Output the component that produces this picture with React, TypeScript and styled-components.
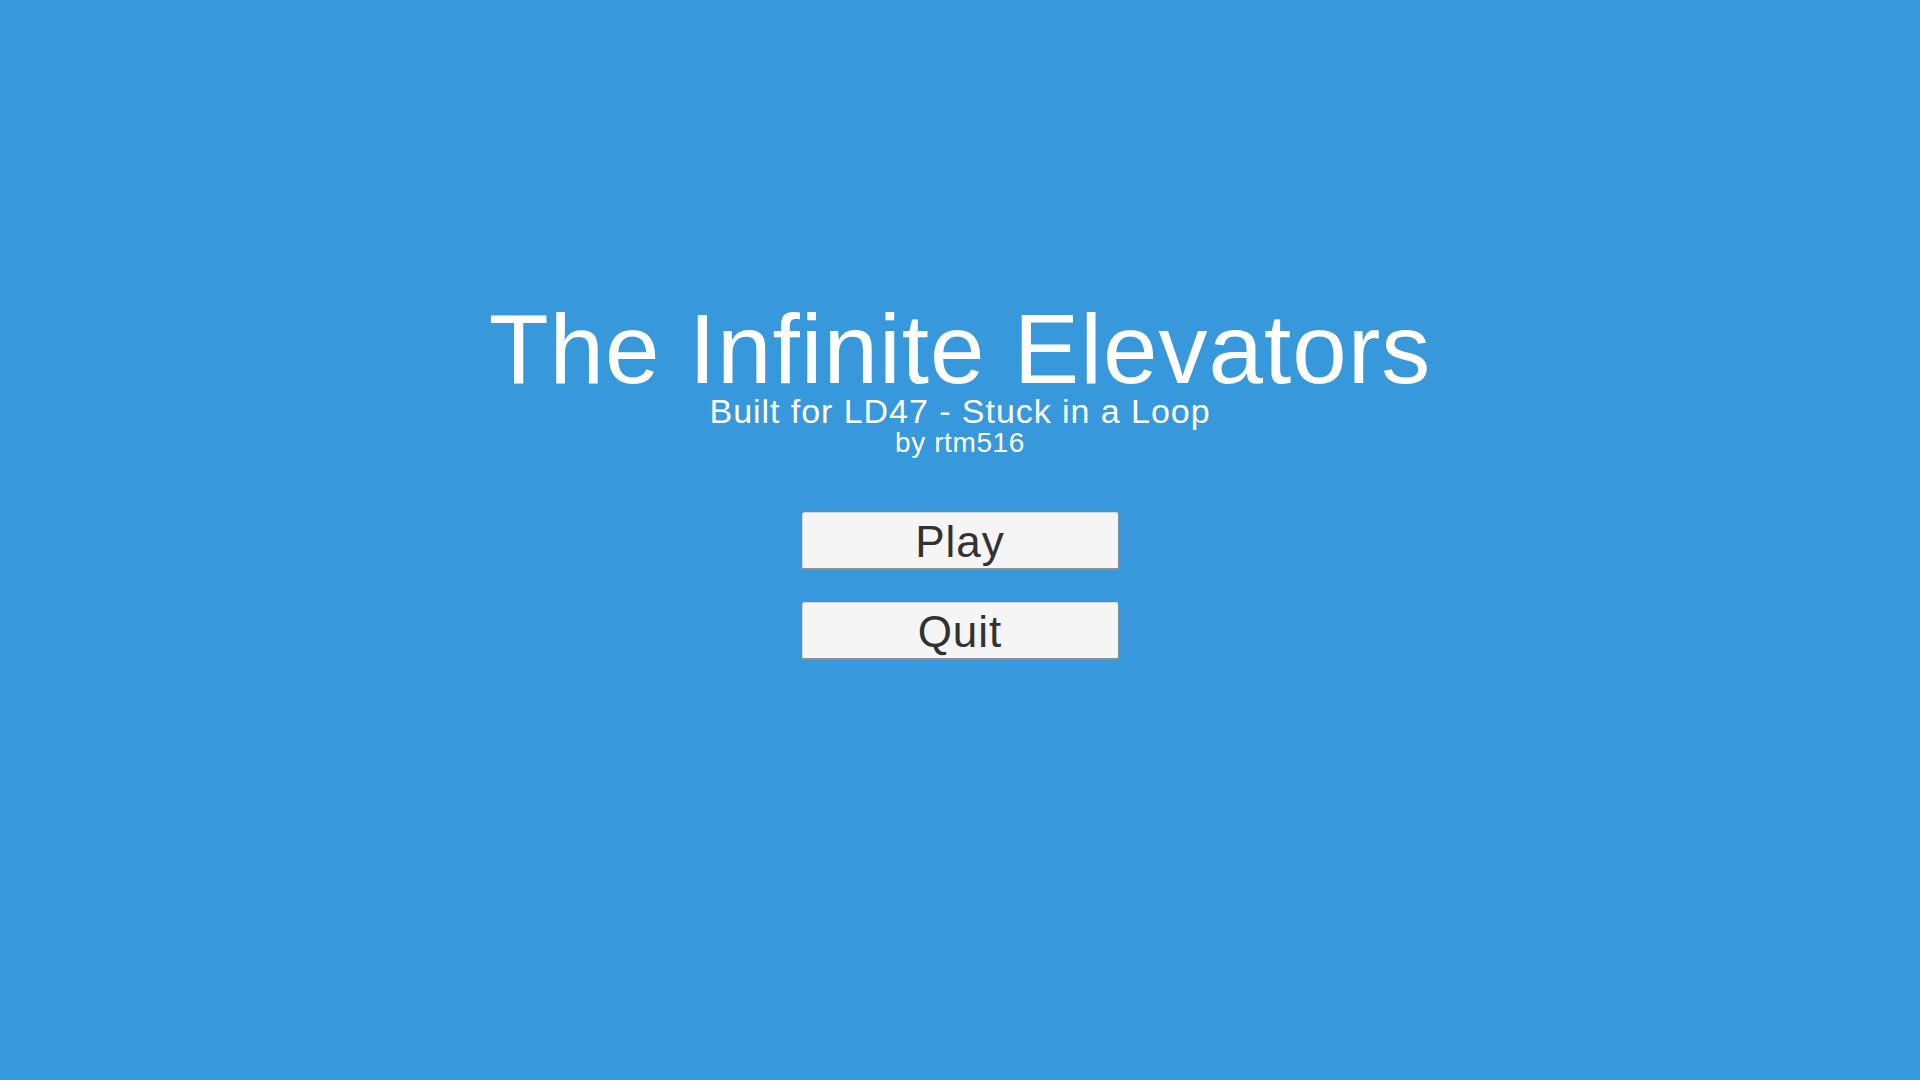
import React from "react";
import styled, { createGlobalStyle } from "styled-components";

const GlobalStyle = createGlobalStyle`
  html, body {
    margin: 0;
    padding: 0;
    background: #3798db;
  }
  body {
    font-family: "Liberation Sans", Arial, sans-serif;
  }
`;

const Screen = styled.main`
  width: 100%;
  min-height: 100vh;
  background: #3798db;
  display: flex;
  flex-direction: column;
  align-items: center;
  padding-top: 304px;
  box-sizing: border-box;
  font-family: "Liberation Sans", Arial, sans-serif;
`;

const Title = styled.h1`
  margin: 0;
  font-size: 98px;
  font-weight: 400;
  line-height: 90px;
  letter-spacing: 1px;
  color: #ffffff;
  white-space: nowrap;
`;

const Subtitle = styled.p`
  margin: 0;
  font-size: 34px;
  line-height: 34px;
  letter-spacing: 0.95px;
  color: #ffffff;
  white-space: nowrap;
`;

const Author = styled.p`
  margin: 1px 0 0;
  font-size: 28px;
  line-height: 28px;
  letter-spacing: 0.6px;
  color: #ffffff;
  white-space: nowrap;
`;

const Menu = styled.nav`
  margin-top: 55px;
  display: flex;
  flex-direction: column;
  gap: 32px;
`;

const MenuButton = styled.button`
  width: 317px;
  height: 58px;
  box-sizing: border-box;
  display: flex;
  align-items: center;
  justify-content: center;
  padding: 2px 0 0;
  background: #f5f5f5;
  border: 1px solid #d4d4d4;
  border-right-color: #8e8e8e;
  border-bottom: 2px solid #8e8e8e;
  border-radius: 3px;
  font-family: "Liberation Sans", Arial, sans-serif;
  font-size: 44px;
  line-height: 44px;
  letter-spacing: 1px;
  color: #323232;
  cursor: pointer;
`;

export default function App() {
  return (
    <>
      <GlobalStyle />
      <Screen>
        <Title>The Infinite Elevators</Title>
        <Subtitle>Built for LD47 - Stuck in a Loop</Subtitle>
        <Author>by rtm516</Author>
        <Menu>
          <MenuButton>Play</MenuButton>
          <MenuButton>Quit</MenuButton>
        </Menu>
      </Screen>
    </>
  );
}
